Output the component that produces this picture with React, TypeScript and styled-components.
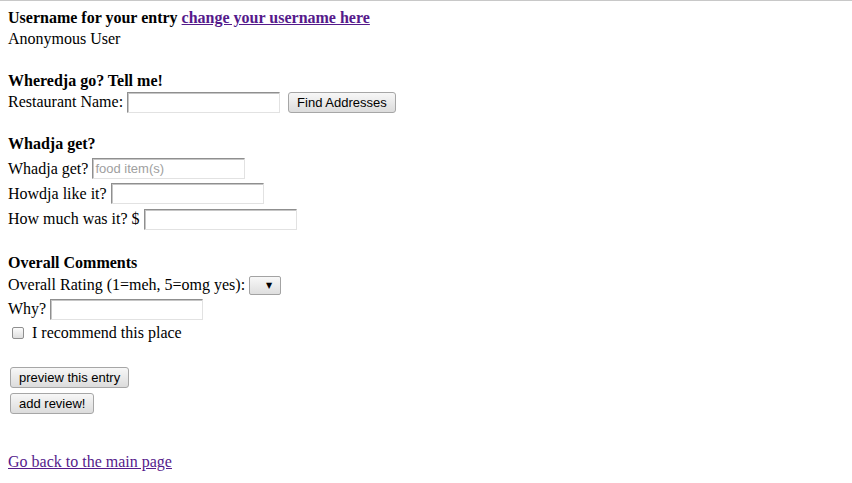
import styled, { createGlobalStyle } from 'styled-components'

const GlobalStyle = createGlobalStyle`
    html, body {
        margin: 0;
        padding: 0;
        background: #fff;
    }
    body {
        font-family: 'Liberation Serif', 'Times New Roman', serif;
        font-size: 16px;
        color: #000;
    }
`;

const Page = styled.div`
    border-top: 1px solid #c8c8c8;
    padding: 7px 8px 0;
    display: flex;
    flex-direction: column;
`;

const Section = styled.section<{ $top?: number }>`
    display: flex;
    flex-direction: column;
    margin-top: ${p => p.$top ?? 21}px;
    &:first-child {
        margin-top: 0;
    }
`;

const Heading = styled.div`
    font-weight: 700;
    line-height: 20px;
    height: 20px;
`;

const Line = styled.div`
    line-height: 20px;
    height: 20px;
`;

const Row = styled.div<{ $h?: number }>`
    display: flex;
    align-items: center;
    height: ${p => p.$h ?? 22}px;
    white-space: nowrap;
`;

const Link = styled.a`
    color: #551a8b;
    text-decoration: underline;
    cursor: pointer;
`;

const TextInput = styled.input`
    box-sizing: border-box;
    width: 153px;
    height: 21px;
    margin-left: 4px;
    padding: 1px 2px;
    border: 1px solid;
    border-color: #8f8f8f #e2e2e2 #e2e2e2 #8f8f8f;
    box-shadow: inset 1px 1px 0 #c6c6c6;
    background: #fff;
    font-family: 'Liberation Sans', Arial, sans-serif;
    font-size: 13px;
    outline: none;
    &::placeholder {
        color: #a0a0a0;
    }
`;

const Button = styled.button<{ $left?: number }>`
    box-sizing: border-box;
    height: 21px;
    margin-left: ${p => p.$left ?? 0}px;
    padding: 0 8px;
    border: 1px solid #a6a6a6;
    border-radius: 3px;
    background: linear-gradient(#f7f7f7, #dcdcdc);
    font-family: 'Liberation Sans', Arial, sans-serif;
    font-size: 13px;
    color: #000;
    cursor: pointer;
`;

const ButtonStack = styled.div`
    display: flex;
    flex-direction: column;
    align-items: flex-start;
    gap: 5px;
    padding-left: 2px;
`;

const SelectWrap = styled.span`
    position: relative;
    display: inline-block;
    margin-left: 4px;
    width: 32px;
    height: 19px;
`;

const Select = styled.select`
    appearance: none;
    box-sizing: border-box;
    width: 32px;
    height: 19px;
    border: 1px solid #a3a3a3;
    border-radius: 2px;
    background: linear-gradient(#f8f8f8, #dedede);
    font-family: 'Liberation Sans', Arial, sans-serif;
    font-size: 13px;
    color: transparent;
    outline: none;
`;

const Arrow = styled.span`
    position: absolute;
    right: 9px;
    top: 3px;
    font-size: 8px;
    line-height: 13px;
    color: #000;
    pointer-events: none;
    font-family: 'DejaVu Sans', sans-serif;
`;

const Checkbox = styled.input`
    appearance: none;
    box-sizing: border-box;
    width: 12px;
    height: 12px;
    margin: 0 8px 0 4px;
    border: 1px solid #8f8f8f;
    border-radius: 2px;
    background: linear-gradient(#fcfcfc, #dedede);
`;

const App = () => {
  return (
    <>
      <GlobalStyle />
      <Page>
        <Section>
          <Heading>
            Username for your entry <Link href="#">change your username here</Link>
          </Heading>
          <Line style={{ marginTop: 1 }}>Anonymous User</Line>
        </Section>

        <Section $top={22}>
          <Heading>Wheredja go? Tell me!</Heading>
          <Row>
            Restaurant Name:
            <TextInput type="text" />
            <Button $left={8}>Find Addresses</Button>
          </Row>
        </Section>

        <Section>
          <Heading>Whadja get?</Heading>
          <Row $h={25} style={{ marginTop: 2 }}>
            Whadja get?
            <TextInput type="text" placeholder="food item(s)" />
          </Row>
          <Row $h={25}>
            Howdja like it?
            <TextInput type="text" />
          </Row>
          <Row $h={26}>
            How much was it? $
            <TextInput type="text" />
          </Row>
        </Section>

        <Section>
          <Heading>Overall Comments</Heading>
          <Row style={{ marginTop: 1 }}>
            Overall Rating (1=meh, 5=omg yes):
            <SelectWrap>
              <Select defaultValue="">
                <option value=""></option>
                <option>1</option>
                <option>2</option>
                <option>3</option>
                <option>4</option>
                <option>5</option>
              </Select>
              <Arrow>▼</Arrow>
            </SelectWrap>
          </Row>
          <Row $h={26}>
            Why?
            <TextInput type="text" />
          </Row>
          <Row>
            <Checkbox type="checkbox" />
            I recommend this place
          </Row>
        </Section>

        <Section $top={23}>
          <ButtonStack>
            <Button>preview this entry</Button>
            <Button>add review!</Button>
          </ButtonStack>
        </Section>

        <Section $top={38}>
          <Line>
            <Link href="#">Go back to the main page</Link>
          </Line>
        </Section>
      </Page>
    </>
  )
}

export default App;
